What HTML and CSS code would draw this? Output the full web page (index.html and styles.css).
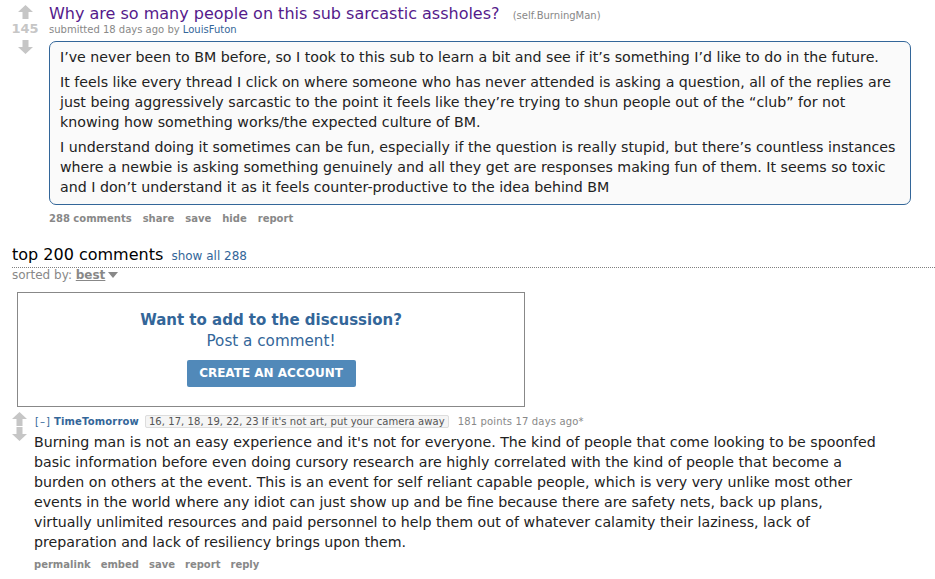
FILE: index.html
```html
<!DOCTYPE html>
<html>
<head>
<meta charset="utf-8">
<link rel="stylesheet" href="styles.css">
</head>
<body>
<div class="link">
  <div class="midcol">
    <svg class="arrow" viewBox="0 0 15 14" width="15" height="14"><path d="M7.5 0 L15 7 H10.5 V14 H4.5 V7 H0 Z"/></svg>
    <div class="score">145</div>
    <svg class="arrow" viewBox="0 0 15 14" width="15" height="14"><path d="M7.5 14 L15 7 H10.5 V0 H4.5 V7 H0 Z"/></svg>
  </div>
  <div class="entry">
    <p class="title"><a class="title-link" href="#">Why are so many people on this sub sarcastic assholes?</a> <span class="domain">(self.BurningMan)</span></p>
    <p class="tagline">submitted 18 days ago by <a class="author" href="#">LouisFuton</a></p>
    <div class="usertext">
      <p>I’ve never been to BM before, so I took to this sub to learn a bit and see if it’s something I’d like to do in the future.</p>
      <p>It feels like every thread I click on where someone who has never attended is asking a question, all of the replies are just being aggressively sarcastic to the point it feels like they’re trying to shun people out of the “club” for not knowing how something works/the expected culture of BM.</p>
      <p>I understand doing it sometimes can be fun, especially if the question is really stupid, but there’s countless instances where a newbie is asking something genuinely and all they get are responses making fun of them. It seems so toxic and I don’t understand it as it feels counter-productive to the idea behind BM</p>
    </div>
    <ul class="buttons">
      <li>288 comments</li><li>share</li><li>save</li><li>hide</li><li>report</li>
    </ul>
  </div>
</div>

<div class="panestack">
  <div class="panestack-title"><span class="pt">top 200 comments</span> <a class="showall" href="#">show all 288</a></div>
  <div class="sorted">sorted by: <span class="best">best</span><span class="caret"></span></div>
</div>

<div class="login">
  <div class="want">Want to add to the discussion?</div>
  <div class="post">Post a comment!</div>
  <div class="btnwrap"><a class="create" href="#">CREATE AN ACCOUNT</a></div>
</div>

<div class="comment">
  <div class="cmidcol">
    <svg class="arrow" viewBox="0 0 15 14" width="15" height="14"><path d="M7.5 0 L15 7 H10.5 V14 H4.5 V7 H0 Z"/></svg>
    <svg class="arrow" viewBox="0 0 15 14" width="15" height="14"><path d="M7.5 14 L15 7 H10.5 V0 H4.5 V7 H0 Z"/></svg>
  </div>
  <div class="centry">
    <p class="ctagline"><span class="expand">[–]</span> <a class="cauthor" href="#">TimeTomorrow</a><span class="flair">16, 17, 18, 19, 22, 23 If it's not art, put your camera away</span><span class="meta">181 points 17 days ago*</span></p>
    <div class="cbody">Burning man is not an easy experience and it's not for everyone. The kind of people that come looking to be spoonfed basic information before even doing cursory research are highly correlated with the kind of people that become a burden on others at the event. This is an event for self reliant capable people, which is very very unlike most other events in the world where any idiot can just show up and be fine because there are safety nets, back up plans, virtually unlimited resources and paid personnel to help them out of whatever calamity their laziness, lack of preparation and lack of resiliency brings upon them.</div>
    <ul class="buttons cbuttons">
      <li>permalink</li><li>embed</li><li>save</li><li>report</li><li>reply</li>
    </ul>
  </div>
</div>
</body>
</html>
```

FILE: styles.css
```css
body {
  margin: 0;
  font-family: "DejaVu Sans", Verdana, sans-serif;
  color: #222;
  background: #fff;
}
a { text-decoration: none; }
p { margin: 0; }

.link {
  display: flex;
  padding-top: 5px;
}
.midcol {
  width: 30px;
  margin-left: 10px;
  display: flex;
  flex-direction: column;
  align-items: center;
}
.arrow { fill: #c6c6c6; display: block; }
.score {
  font-size: 13px;
  font-weight: bold;
  color: #c6c6c6;
  line-height: 15px;
  margin: 2px 0 4px;
}
.entry {
  margin-left: 9px;
  flex: 0 0 862px;
}
.title {
  font-size: 16px;
  line-height: 17px;
}
.title-link { color: #551a8b; }
.domain { font-size: 10px; color: #888; margin-left: 8px; }
.tagline {
  font-size: 10px;
  color: #888;
  line-height: 12px;
  margin-top: 0;
}
.author { color: #369; }
.usertext {
  margin-top: 5px;
  border: 1px solid #369;
  border-radius: 7px;
  background: #fafafa;
  padding: 0 10px 7px;
  font-size: 14.2px;
  line-height: 20px;
}
.usertext p { margin: 5px 0; }
.usertext p:last-child { margin-bottom: 0; }
.buttons {
  list-style: none;
  margin: 0;
  padding: 0;
  display: flex;
  gap: 11px;
  font-size: 10px;
  font-weight: bold;
  color: #888;
  margin-top: 8px;
  line-height: 12px;
}

.panestack {
  margin: 20px 0 0 12px;
}
.panestack-title {
  border-bottom: 1px dotted #808080;
  line-height: 19px;
  padding-bottom: 1px;
}
.pt { font-size: 16px; color: #000; }
.showall { font-size: 12px; color: #369; margin-left: 3px; }
.sorted {
  font-size: 12px;
  color: #888;
  line-height: 15px;
}
.best { font-weight: bold; text-decoration: underline; }
.caret {
  display: inline-block;
  width: 0; height: 0;
  border-left: 5px solid transparent;
  border-right: 5px solid transparent;
  border-top: 6px solid #888;
  margin-left: 3px;
  vertical-align: 1px;
}

.login {
  margin: 9px 0 0 17px;
  width: 506px;
  height: 113px;
  border: 1px solid #888;
  text-align: center;
}
.want {
  margin-top: 18px;
  font-size: 15px;
  font-weight: bold;
  color: #336699;
  line-height: 19px;
}
.post {
  font-size: 15.2px;
  color: #336699;
  line-height: 20px;
  margin-top: 1px;
}
.btnwrap { margin-top: 9px; line-height: 0; }
.create {
  display: inline-block;
  background: #5189b9;
  color: #fff;
  font-size: 12px;
  font-weight: bold;
  width: 169px;
  line-height: 27px;
  border-radius: 2px;
}

.comment {
  display: flex;
  margin: 7px 0 0 12px;
}
.cmidcol {
  width: 15px;
  display: flex;
  flex-direction: column;
  gap: 1px;
  margin-top: -2px;
}
.centry { margin-left: 7px; }
.ctagline {
  font-size: 10px;
  color: #888;
  line-height: 14px;
  padding-top: 1px;
}
.expand { color: #369; margin-left: 1px; letter-spacing: 1px; }
.cauthor { color: #369; font-weight: bold; letter-spacing: 0.15px; }
.flair {
  background: #f5f5f5;
  border: 1px solid #ddd;
  color: #545454;
  padding: 0 3px;
  border-radius: 2px;
  margin: 0 9px 0 6px;
  letter-spacing: 0.07px;
}
.meta { letter-spacing: 0.15px; }
.cbody {
  font-size: 14.2px;
  line-height: 20px;
  max-width: 848px;
  margin-top: 3px;
}
.cbuttons { margin-top: 7px; gap: 10px; }
```
